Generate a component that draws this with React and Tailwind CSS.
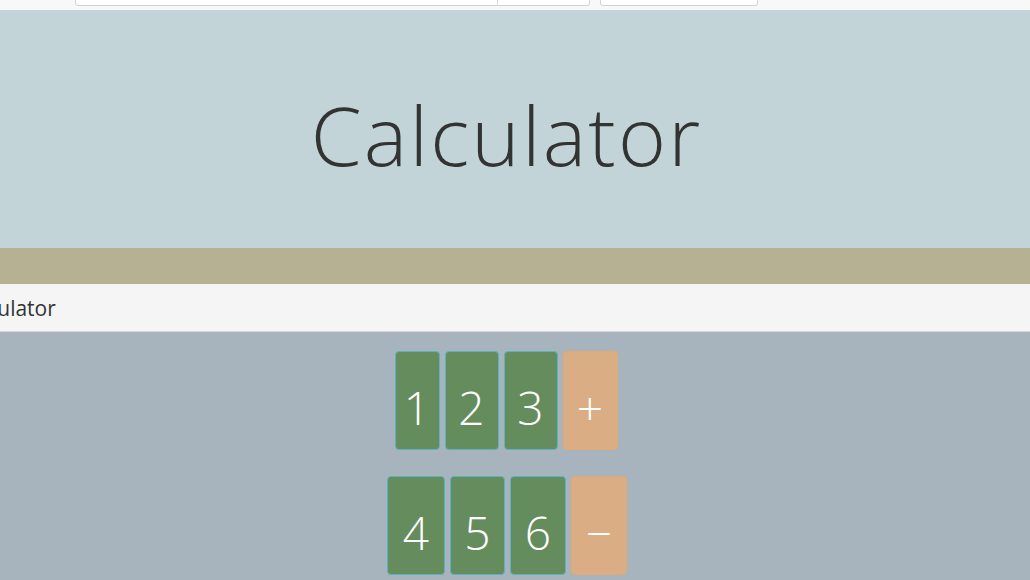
export default function App() {
  const font = { fontFamily: '"Open Sans", "DejaVu Sans", sans-serif' };
  const row1 = [
    { t: "1", w: "w-[45px]", op: false },
    { t: "2", w: "w-[54px]", op: false },
    { t: "3", w: "w-[54px]", op: false },
    { t: "+", w: "w-[55px]", op: true },
  ];
  const row2 = [
    { t: "4", w: "w-[58px]", op: false },
    { t: "5", w: "w-[55px]", op: false },
    { t: "6", w: "w-[56px]", op: false },
    { t: "\u2212", w: "w-[56px]", op: true },
  ];
  const Btn = ({ b }) => (
    <div
      className={
        b.w +
        " h-[99px] rounded-[4px] border flex items-center justify-center pt-[12px] text-white text-[46px] font-light leading-none " +
        (b.op
          ? "bg-[#dbad85] border-[#e2aa6e]"
          : "bg-[#658c5c] border-[#5cb3c2]")
      }
    >
      {b.t}
    </div>
  );
  return (
    <div className="w-[1030px] h-[580px] overflow-hidden bg-[#a7b4bd]" style={font}>
      {/* top bar */}
      <div className="h-[10px] bg-[#f8f8f8] flex overflow-hidden">
        <div className="ml-[75px] w-[515px] h-[20px] -mt-[14px] bg-white border border-[#d2d2d2] rounded-[3px] flex justify-end">
          <div className="w-[92px] border-l border-[#dcdcdc]" />
        </div>
        <div className="ml-[10px] w-[158px] h-[20px] -mt-[14px] bg-white border border-[#d2d2d2] rounded-[3px]" />
      </div>
      {/* header */}
      <div className="h-[238px] bg-[#c2d4d8]">
        <div className="w-[1013px] h-full flex items-center justify-center pt-[10px]">
          <h1 className="text-[#333333] text-[82px] font-light leading-none tracking-[2.2px]">Calculator</h1>
        </div>
      </div>
      {/* khaki band */}
      <div className="h-[36px] bg-[#b7b194]" />
      {/* title bar */}
      <div className="h-[48px] bg-[#f5f5f5] border-b border-[#d6d6d6] flex items-center overflow-hidden">
        <span className="-ml-[43px] text-[21px] text-[#333333] pt-[2px]">Calculator</span>
      </div>
      {/* keypad */}
      <div className="w-[1013px] flex flex-col items-center pt-[19px] gap-[26px]">
        <div className="flex gap-[5px] pr-[1px]">
          {row1.map((b) => (
            <Btn key={b.t} b={b} />
          ))}
        </div>
        <div className="flex gap-[5px] pl-[1px]">
          {row2.map((b) => (
            <Btn key={b.t} b={b} />
          ))}
        </div>
      </div>
    </div>
  );
}
